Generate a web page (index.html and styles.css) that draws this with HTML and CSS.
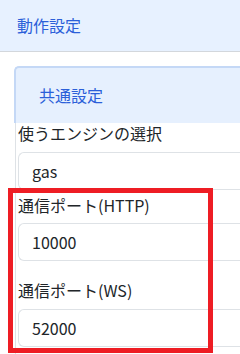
FILE: index.html
```html
<!DOCTYPE html>
<html lang="ja">
<head>
	<meta charset="UTF-8">
	<title>動作設定</title>
	<link rel="stylesheet" href="styles.css">
</head>
<body>
<div class="panel-head">動作設定</div>
<div class="panel-body">
	<div class="card">
		<div class="card-head">共通設定</div>
		<div class="card-body">
			<label class="lbl lbl-engine">使うエンジンの選択</label>
			<input class="field" type="text" value="gas" readonly>
			<label class="lbl lbl-http">通信ポート(HTTP)</label>
			<input class="field" type="text" value="10000" readonly>
			<label class="lbl lbl-ws">通信ポート(WS)</label>
			<input class="field" type="text" value="52000" readonly>
		</div>
	</div>
</div>
<div class="highlight"></div>
</body>
</html>
```
FILE: styles.css
```css
html,body{
	margin:0;
	padding:0;
	background:#fff;
	overflow:hidden;
}
body{
	width:240px;
	height:354px;
	position:relative;
	font-size:16px;
	font-family:"Noto Sans CJK JP","Noto Sans",sans-serif;
	color:#212529;
}
.panel-head{
	height:51px;
	line-height:51px;
	padding-left:17px;
	background-color:#e7f1ff;
	border-bottom:1px solid #d3d7dc;
	color:#2b5fd9;
	white-space:nowrap;
}
.panel-body{
	padding:14px 0 0 14px;
}
.card{
	overflow:hidden;
}
.card-head{
	height:40px;
	padding:15px 0 0 23px;
	line-height:24px;
	background-color:#e6f0fe;
	border-top:2px solid #c4d8f6;
	border-left:2px solid #c4d8f6;
	border-top-left-radius:5px;
	color:#2b5fd9;
	white-space:nowrap;
}
.card-body{
	margin-left:1px;
	padding-left:2px;
	border-left:1px solid #dee2e6;
	padding-bottom:20px;
}
.lbl{
	display:block;
	line-height:20px;
	white-space:nowrap;
}
.lbl-engine{
	margin-bottom:9px;
}
.lbl-http{
	margin-top:5px;
	margin-bottom:8px;
}
.lbl-ws{
	margin-top:19px;
	margin-bottom:9px;
}
.field{
	display:block;
	box-sizing:border-box;
	width:100%;
	height:38px;
	margin:0;
	padding:0 13px;
	border:1px solid #dee2e6;
	border-right:none;
	border-radius:6px 0 0 6px;
	font-size:16px;
	font-family:"Noto Sans CJK JP","Noto Sans",sans-serif;
	color:#212529;
	background:#fff;
	outline:none;
}
.highlight{
	position:absolute;
	left:8px;
	top:188px;
	width:195px;
	height:155px;
	border:5px solid #ee1d24;
}
```
